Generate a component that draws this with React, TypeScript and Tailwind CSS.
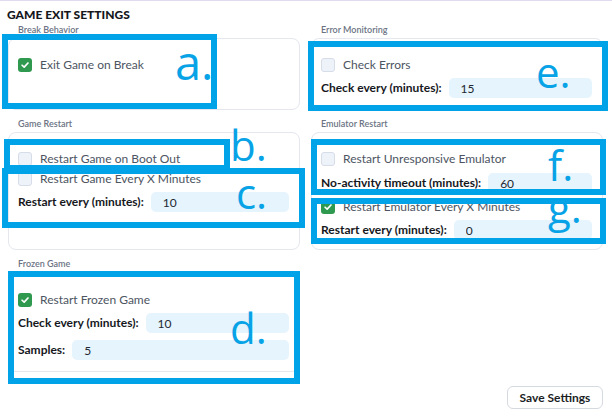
import { ReactNode } from "react";

const Check = ({ checked }: { checked?: boolean }) =>
  checked ? (
    <span className="flex h-[14px] w-[14px] shrink-0 items-center justify-center rounded-[3px] bg-[#2f9a4f]">
      <svg viewBox="0 0 12 12" className="h-[10px] w-[10px]" fill="none" stroke="white" strokeWidth="2" strokeLinecap="round" strokeLinejoin="round">
        <polyline points="2.5,6.3 5,8.6 9.6,3.6" />
      </svg>
    </span>
  ) : (
    <span className="h-[14px] w-[14px] shrink-0 rounded-[3px] border border-[#d6dce8] bg-[#eef2f9]" />
  );

const CheckRow = ({ label, checked, className = "" }: { label: string; checked?: boolean; className?: string }) => (
  <div className={`flex h-[20px] items-center gap-2 ${className}`}>
    <Check checked={checked} />
    <span className="text-[12px] text-[#4d5562]">{label}</span>
  </div>
);

const Field = ({ label, value, className = "" }: { label: string; value: string; className?: string }) => (
  <div className={`flex h-[20px] items-center ${className}`}>
    <span className="whitespace-nowrap text-[12px] font-bold text-[#16181d]">{label}</span>
    <input
      readOnly
      defaultValue={value}
      className="ml-[7px] h-[20px] min-w-0 flex-1 rounded-[5px] bg-[#e5f4fd] pl-3 text-[12px] text-[#222831] outline-none"
    />
  </div>
);

const Section = ({ title, children, className = "" }: { title: string; children: ReactNode; className?: string }) => (
  <div className="flex flex-col">
    <div className="mb-[2px] pl-[10px] text-[9px] leading-[12px] font-semibold text-[#6b7383]">{title}</div>
    <div className={`flex flex-1 flex-col rounded-lg border border-[#e4e7ee] pl-[9px] pr-[10px] ${className}`}>
      {children}
    </div>
  </div>
);

// annotation frames drawn over the screenshot
const boxes = [
  { left: 2, top: 33, width: 215, height: 75 },
  { left: 4, top: 138, width: 226, height: 32 },
  { left: 2, top: 167, width: 303, height: 60 },
  { left: 8, top: 270, width: 292, height: 113 },
  { left: 308, top: 40, width: 300, height: 70 },
  { left: 311, top: 138, width: 295, height: 56 },
  { left: 311, top: 197, width: 295, height: 46 },
];

const letters = [
  { t: "a.", left: 175, top: 38, size: 47 },
  { t: "b.", left: 230, top: 123, size: 42 },
  { t: "c.", left: 236, top: 171, size: 42 },
  { t: "d.", left: 230, top: 306, size: 42 },
  { t: "e.", left: 536, top: 50, size: 42 },
  { t: "f.", left: 548, top: 143, size: 42 },
  { t: "g.", left: 548, top: 185, size: 42 },
];

export default function App() {
  return (
    <div className="relative h-[416px] w-[612px] overflow-hidden border-t border-[#e2dbee] bg-white font-['Lato','Noto_Sans',sans-serif]">
      <h1 className="mb-[1px] pl-[7px] pt-[6px] text-[12px] leading-[16px] font-black text-[#15171c]">GAME EXIT SETTINGS</h1>

      <div className="grid grid-cols-2 gap-x-[11px] gap-y-[8px] pl-[8px] pr-[9px]">
        <Section title="Break Behavior" className="pt-[16px]">
          <CheckRow label="Exit Game on Break" checked />
        </Section>
        <Section title="Error Monitoring" className="pt-[16px] pb-[11px]">
          <CheckRow label="Check Errors" />
          <Field label="Check every (minutes):" value="15" className="mt-[3px]" />
        </Section>

        <Section title="Game Restart" className="pt-[16px]">
          <CheckRow label="Restart Game on Boot Out" />
          <CheckRow label="Restart Game Every X Minutes" />
          <Field label="Restart every (minutes):" value="10" className="mt-[3px]" />
        </Section>
        <Section title="Emulator Restart" className="pt-[16px] pb-[9px]">
          <CheckRow label="Restart Unresponsive Emulator" />
          <Field label="No-activity timeout (minutes):" value="60" className="mt-1" />
          <CheckRow label="Restart Emulator Every X Minutes" checked className="mt-1" />
          <Field label="Restart every (minutes):" value="0" className="mt-[3px]" />
        </Section>

        <Section title="Frozen Game" className="pt-[17px] pb-[11px]">
          <CheckRow label="Restart Frozen Game" checked />
          <Field label="Check every (minutes):" value="10" className="mt-[3px]" />
          <Field label="Samples:" value="5" className="mt-[7px]" />
        </Section>
      </div>

      <div className="mt-[14px] flex justify-end pr-[9px]">
        <button className="h-[23px] w-[96px] rounded-md border border-[#d5d9e0] bg-white text-[12px] font-bold text-[#1b1e24]">
          Save Settings
        </button>
      </div>

      {boxes.map((b, i) => (
        <div
          key={i}
          className="pointer-events-none absolute border-[6px] border-[#00a2e8]"
          style={{ left: b.left, top: b.top, width: b.width, height: b.height }}
        />
      ))}
      {letters.map((l) => (
        <span
          key={l.t}
          className="pointer-events-none absolute font-['Open_Sans',sans-serif] leading-none text-[#08a3e6]"
          style={{ left: l.left, top: l.top, fontSize: l.size }}
        >
          {l.t}
        </span>
      ))}
    </div>
  );
}
